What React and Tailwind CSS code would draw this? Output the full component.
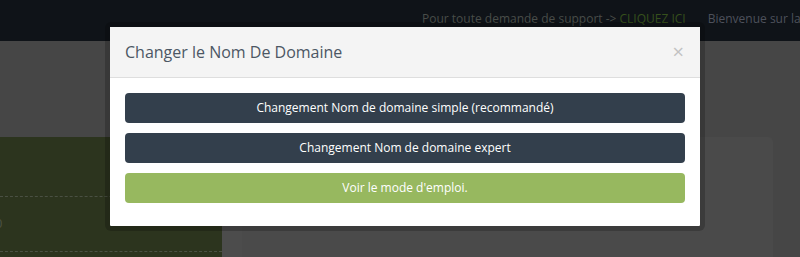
import React from "react";

const buttons = [
  { label: "Changement Nom de domaine simple (recommandé)", cls: "bg-[#333f4c]" },
  { label: "Changement Nom de domaine expert", cls: "bg-[#333f4c]" },
  { label: "Voir le mode d'emploi.", cls: "bg-[#97b85f]" },
];

function DomainModal() {
  return (
    <div className="absolute left-[105px] top-[22px] w-[600px] rounded-[6px] border-[5px] border-black/20 bg-white bg-clip-padding">
      <div className="flex h-[51px] items-center justify-between border-b border-[#dedede] bg-[#f4f4f4] pl-[15px] pr-[16px]">
        <h4 className="text-[16px] text-[#4c5764]">Changer le Nom De Domaine</h4>
        <button className="text-[20px] leading-none text-[#c2c2c2]">×</button>
      </div>
      <div className="flex flex-col gap-[10px] px-[15px] pb-[23px] pt-[15px]">
        {buttons.map((b) => (
          <button
            key={b.label}
            className={`h-[30px] w-full rounded-[4px] text-[12px] text-white ${b.cls}`}
          >
            {b.label}
          </button>
        ))}
      </div>
    </div>
  );
}

export default function App() {
  return (
    <div
      className="relative h-[257px] w-[800px] overflow-hidden bg-[#464646]"
      style={{ fontFamily: '"Open Sans", "Liberation Sans", sans-serif' }}
    >
      <nav className="flex h-[41px] items-center overflow-hidden whitespace-nowrap bg-[#0f1318] pb-[4px] pl-[422px] text-[12px]">
        <span className="text-[#494d49]">
          Pour toute demande de support -&gt; <span className="text-[#36501c]">CLIQUEZ ICI</span>
        </span>
        <span className="ml-[22px] text-[#4d515b]">Bienvenue sur la</span>
      </nav>

      <div className="flex h-[216px] pt-[96px]">
        <div className="w-[222px] bg-[#2c341e] pt-[59px]">
          <div className="border-t border-dashed border-[#4a5043]" />
          <div className="flex h-[54px] items-center text-[13px] text-[#4c5244]">
            <span className="-ml-[5px]">0</span>
          </div>
          <div className="border-t border-dashed border-[#4a5043]" />
        </div>
        <div className="w-[20px] bg-[#4c4c4c]" />
        <div className="w-[531px] rounded-tr-[5px] bg-[#4a4a4a]" />
      </div>

      <DomainModal />
    </div>
  );
}
